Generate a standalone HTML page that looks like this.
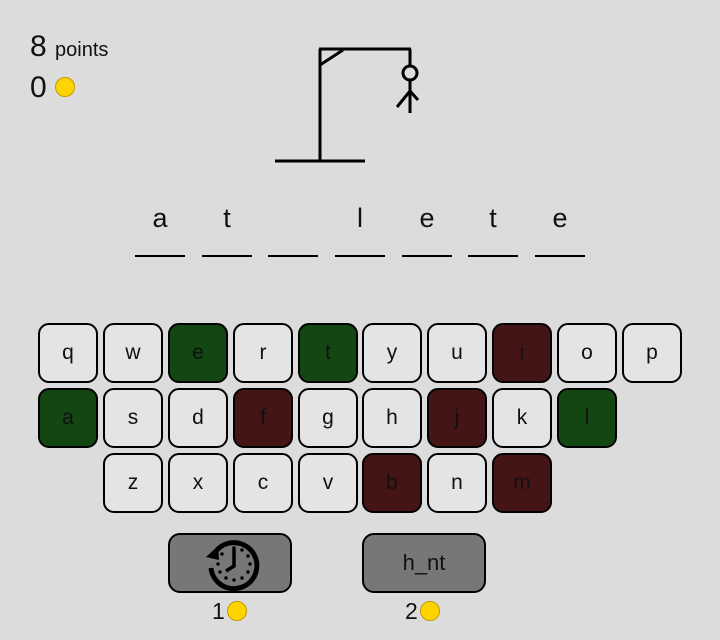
<!DOCTYPE html>
<html><head><style>
body{margin:0;width:720px;height:640px;background:#dcdcdc;font-family:"Liberation Sans",sans-serif;position:relative;overflow:hidden;color:#111}
.a{position:absolute}
.coin{display:inline-block;width:20px;height:20px;border-radius:50%;background:#fdd400;border:1px solid #c49a00;box-sizing:border-box;vertical-align:middle}
.k{position:absolute;width:60px;height:60px;box-sizing:border-box;border:2px solid #000;border-radius:11px;background:#e4e4e4;font-size:21px;text-align:center;line-height:56px}
.g{background:#124712}.r{background:#451516}
.u{position:absolute;top:255px;width:50px;height:2px;background:#000}
.l{position:absolute;top:203px;width:50px;text-align:center;font-size:27px}
.b{position:absolute;top:533px;width:124px;height:60px;box-sizing:border-box;border:2px solid #000;border-radius:12px;background:#777;text-align:center;line-height:56px;font-size:22px}
</style></head><body>
<div class="a" style="left:30px;top:30px;font-size:30px">8 <span style="font-size:20px">points</span></div>
<div class="a" style="left:30px;top:71px;font-size:30px">0 <span class="coin" style="margin-top:-5px"></span></div>
<svg class="a" style="left:0;top:0" width="720" height="200">
<g stroke="#000" stroke-width="3" fill="none">
<line x1="275" y1="161" x2="365" y2="161"/>
<line x1="320" y1="161" x2="320" y2="49"/>
<line x1="319" y1="49" x2="411" y2="49"/>
<line x1="320" y1="65" x2="343" y2="50"/>
<line x1="410" y1="49" x2="410" y2="66"/>
<circle cx="410" cy="73" r="7"/>
<line x1="410" y1="80" x2="410" y2="113"/>
<line x1="397" y1="107" x2="410" y2="91"/>
<line x1="418" y1="100" x2="410" y2="91"/>
</g></svg>
<div class="l" style="left:135px">a</div><div class="u" style="left:135px"></div>
<div class="l" style="left:202px">t</div><div class="u" style="left:202px"></div>
<div class="u" style="left:268px"></div>
<div class="l" style="left:335px">l</div><div class="u" style="left:335px"></div>
<div class="l" style="left:402px">e</div><div class="u" style="left:402px"></div>
<div class="l" style="left:468px">t</div><div class="u" style="left:468px"></div>
<div class="l" style="left:535px">e</div><div class="u" style="left:535px"></div>

<div class="k" style="left:38px;top:323px">q</div>
<div class="k" style="left:103px;top:323px">w</div>
<div class="k g" style="left:168px;top:323px">e</div>
<div class="k" style="left:233px;top:323px">r</div>
<div class="k g" style="left:298px;top:323px">t</div>
<div class="k" style="left:362px;top:323px">y</div>
<div class="k" style="left:427px;top:323px">u</div>
<div class="k r" style="left:492px;top:323px">i</div>
<div class="k" style="left:557px;top:323px">o</div>
<div class="k" style="left:622px;top:323px">p</div>

<div class="k g" style="left:38px;top:388px">a</div>
<div class="k" style="left:103px;top:388px">s</div>
<div class="k" style="left:168px;top:388px">d</div>
<div class="k r" style="left:233px;top:388px">f</div>
<div class="k" style="left:298px;top:388px">g</div>
<div class="k" style="left:362px;top:388px">h</div>
<div class="k r" style="left:427px;top:388px">j</div>
<div class="k" style="left:492px;top:388px">k</div>
<div class="k g" style="left:557px;top:388px">l</div>

<div class="k" style="left:103px;top:453px">z</div>
<div class="k" style="left:168px;top:453px">x</div>
<div class="k" style="left:233px;top:453px">c</div>
<div class="k" style="left:298px;top:453px">v</div>
<div class="k r" style="left:362px;top:453px">b</div>
<div class="k" style="left:427px;top:453px">n</div>
<div class="k r" style="left:492px;top:453px">m</div>

<div class="b" style="left:168px">
<svg width="58" height="58" viewBox="0 0 58 58" style="position:absolute;left:33px;top:0">
<path d="M14 15 A23 23 0 1 1 8 33" fill="none" stroke="#000" stroke-width="5"/>
<path d="M3 22 L16 25 L15 11 Z" fill="#000"/>
<g fill="#000"><circle cx="31" cy="13" r="1.7"/><circle cx="39" cy="15" r="1.7"/><circle cx="45" cy="21" r="1.7"/><circle cx="47" cy="29" r="1.7"/><circle cx="45" cy="37" r="1.7"/><circle cx="39" cy="43" r="1.7"/><circle cx="31" cy="45" r="1.7"/><circle cx="23" cy="43" r="1.7"/><circle cx="17" cy="37" r="1.7"/><circle cx="15" cy="29" r="1.7"/><circle cx="19" cy="19" r="1.7"/></g>
<path d="M31 13 V31 L23 36" fill="none" stroke="#000" stroke-width="3.5"/>
</svg></div>
<div class="b" style="left:362px">h_nt</div>
<div class="a" style="left:212px;top:598px;font-size:23px">1<span class="coin" style="margin-left:2px;margin-top:-4px"></span></div>
<div class="a" style="left:405px;top:598px;font-size:23px">2<span class="coin" style="margin-left:2px;margin-top:-4px"></span></div>
</body></html>
